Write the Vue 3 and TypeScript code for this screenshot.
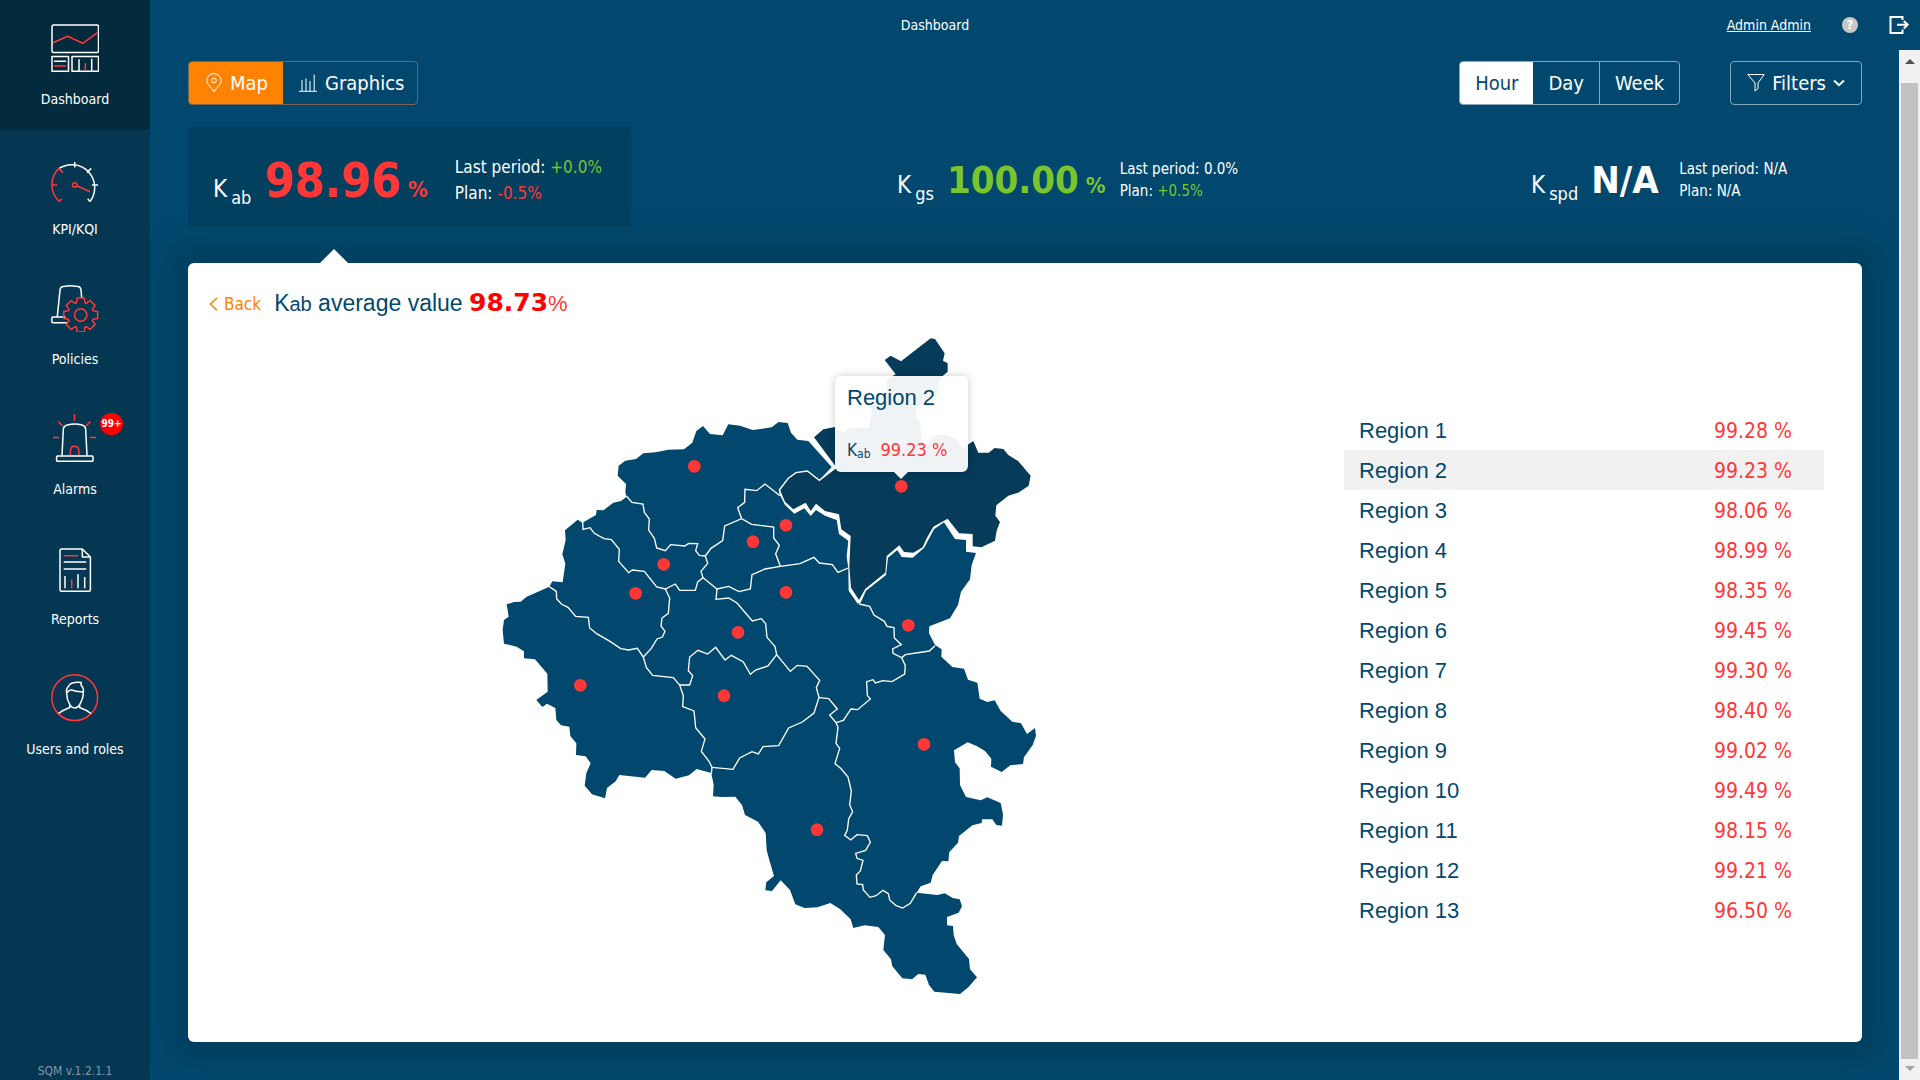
<script setup lang="ts">
import { ref } from 'vue'

interface NavItem { id: string; label: string; badge?: string }
interface Kpi { sub: string; value: string; unit: string; tone: string; last: string; lastTone: string; plan: string; planTone: string }
interface Region { name: string; value: string }

const nav: NavItem[] = [
  { id: 'dashboard', label: 'Dashboard' },
  { id: 'kpi', label: 'KPI/KQI' },
  { id: 'policies', label: 'Policies' },
  { id: 'alarms', label: 'Alarms', badge: '99+' },
  { id: 'reports', label: 'Reports' },
  { id: 'users', label: 'Users and roles' },
]
const activeNav = ref('dashboard')

const kpis: Kpi[] = [
  { sub: 'ab', value: '98.96', unit: '%', tone: 'bad', last: '+0.0%', lastTone: 'good', plan: '-0.5%', planTone: 'bad' },
  { sub: 'gs', value: '100.00', unit: '%', tone: 'good', last: '0.0%', lastTone: '', plan: '+0.5%', planTone: 'good' },
  { sub: 'spd', value: 'N/A', unit: '', tone: '', last: 'N/A', lastTone: '', plan: 'N/A', planTone: '' },
]
const activeKpi = ref('ab')

const periods = ['Hour', 'Day', 'Week']
const period = ref('Hour')
const view = ref('map')

const regions: Region[] = ['99.28', '99.23', '98.06', '98.99', '98.35', '99.45', '99.30', '98.40', '99.02', '99.49', '98.15', '99.21', '96.50']
  .map((value, i) => ({ name: `Region ${i + 1}`, value: `${value} %` }))
const selected = ref('Region 2')

// Eight-toothed gear outline around (29.7, 31)
const gear = Array.from({ length: 8 }, (_, i) => {
  const pts: [number, number][] = [[13, -19], [17.3, -12], [17.3, 12], [13, 19]]
  return pts.map(([r, deg]) => {
    const a = ((i * 45 + deg) * Math.PI) / 180
    return `${(29.7 + r * Math.cos(a)).toFixed(1)},${(31 + r * Math.sin(a)).toFixed(1)}`
  }).join(' ')
}).join(' ')

const land = '50,853 72,846 92,845 110,830 178,800 187,784 218,787 226,731 217,703 227,660 225,631 263,599 277,608 318,585 320,570 340,571 370,548 393,543 409,531 406,515 408,492 383,467 386,437 406,422 438,417 460,400 497,397 535,389 582,388 607,368 619,333 639,318 660,342 698,346 715,313 750,317 788,330 845,322 866,306 893,309 903,338 922,359 955,363 1025,441 988,481 952,453 918,458 895,475 868,510 870,525 885,555 913,581 943,565 962,588 978,570 1005,587 1040,600 1047,642 1075,662 1070,710 1075,745 1076,812 1103,851 1112,848 1128,812 1188,765 1194,713 1222,690 1235,711 1268,713 1302,684 1332,628 1362,607 1395,657 1428,660 1428,695 1458,699 1445,735 1440,778 1413,815 1404,855 1380,895 1318,919 1317,940 1335,975 1355,988 1354,1010 1387,1041 1422,1046 1434,1079 1462,1088 1469,1136 1492,1146 1514,1141 1532,1173 1567,1205 1593,1210 1611,1242 1635,1224 1638,1248 1628,1275 1602,1312 1599,1332 1561,1336 1535,1356 1503,1340 1504,1316 1485,1293 1460,1278 1433,1267 1392,1291 1395,1327 1409,1345 1410,1395 1428,1431 1472,1441 1492,1432 1532,1449 1539,1483 1536,1517 1519,1515 1507,1498 1476,1498 1475,1509 1447,1516 1407,1548 1404,1568 1378,1596 1375,1624 1356,1623 1328,1665 1322,1688 1292,1699 1280,1718 1342,1725 1364,1720 1388,1734 1409,1738 1416,1759 1406,1778 1371,1791 1371,1816 1389,1818 1391,1845 1400,1872 1437,1917 1440,1948 1461,1972 1435,2002 1410,2022 1333,2015 1317,1995 1306,1964 1285,1962 1266,1978 1237,1975 1207,1939 1203,1918 1180,1890 1185,1845 1165,1821 1124,1816 1090,1824 1082,1798 1050,1767 1021,1749 982,1762 944,1764 916,1753 900,1710 872,1681 846,1713 826,1711 829,1687 852,1668 838,1620 830,1590 827,1539 804,1505 765,1485 756,1455 736,1430 695,1431 669,1429 671,1395 664,1359 620,1347 597,1366 557,1376 523,1353 485,1350 465,1373 388,1365 377,1384 351,1404 345,1435 306,1423 284,1397 289,1360 302,1330 287,1309 258,1305 259,1270 241,1248 238,1220 213,1216 199,1200 196,1164 171,1151 157,1161 139,1140 173,1115 172,1061 135,1018 102,1015 102,994 80,980 42,971 38,930 42,900 56,890'

const activeLand = '972,352 1000,328 1035,321 1057,338 1080,323 1135,323 1145,285 1143,255 1190,215 1190,178 1217,163 1184,120 1202,107 1233,124 1322,55 1335,57 1364,100 1359,122 1373,130 1373,155 1350,175 1342,225 1318,243 1280,262 1277,290 1292,310 1293,350 1303,385 1333,347 1365,343 1395,355 1418,385 1450,363 1465,398 1496,398 1514,384 1540,387 1555,405 1585,424 1622,467 1616,497 1585,518 1555,527 1519,556 1516,587 1530,606 1520,632 1515,662 1474,682 1448,679 1448,642 1407,640 1373,596 1330,620 1310,655 1298,682 1270,698 1242,696 1228,676 1190,708 1186,758 1126,806 1107,840 1083,803 1078,740 1082,648 1054,628 1047,583 1005,573 978,551 962,573 947,548 910,568 885,545 870,510 895,475 918,458 952,453 988,481 1040,443'

const borders = [
  '409,528 426,547 459,552 463,577 478,597 476,630 493,655 500,684 526,692 542,674 584,678 596,670 623,671 617,692 628,706 646,708 663,685 698,662 704,618 755,596 785,613 851,621 851,654 868,676 857,701 871,739',
  '755,596 743,563 764,547 765,508 800,512 825,492 870,527',
  '646,708 653,730 633,754 639,773 681,807 716,799 747,815 781,807 786,764 825,747 871,739 930,731 972,712 988,729 1027,734 1044,757 1075,744',
  '278,605 279,628 300,623 313,640 342,656 364,659 388,688 386,724 416,758 427,750 463,754 500,801 526,807 556,792 569,811 616,811 623,786 639,773',
  '526,807 539,834 535,880 516,894 513,918 525,934 517,951 501,957 484,985 460,1011',
  '178,800 199,814 200,836 214,852 234,862 257,889 295,892 299,924 320,941 360,964 392,986 416,990 442,985 460,1011 469,1042 488,1066 550,1073 569,1095 580,1127 578,1160 612,1173 617,1223 645,1257 634,1294 657,1324 666,1342 664,1362',
  '569,1095 599,1095 608,1067 595,1052 599,1011 624,991 653,1002 677,982 705,1020 724,1006 760,1026 781,1063 797,1050 834,1038 860,1004',
  '681,807 678,838 716,834 741,849 787,903 814,896 827,911 831,952 855,980 860,1004 901,1054 922,1036 951,1039 989,1081 979,1103 987,1132 972,1179 937,1206 896,1224 866,1277 819,1280 805,1302 786,1295 749,1314 729,1348 666,1342',
  '987,1133 1016,1136 1042,1167 1019,1185 1038,1208 1044,1222 1038,1270 1049,1285 1035,1331 1052,1345 1074,1371 1084,1413 1079,1455 1088,1475 1076,1497 1072,1530 1064,1546 1082,1560 1101,1544 1132,1547 1141,1567 1127,1591 1097,1600 1101,1615 1119,1621 1111,1653 1099,1665 1101,1692 1118,1694 1120,1710 1140,1732 1158,1727 1179,1711 1195,1721 1199,1740 1217,1756 1238,1764 1261,1750 1280,1718',
  '1038,1208 1060,1201 1083,1167 1103,1169 1141,1137 1132,1126 1130,1085 1149,1079 1156,1089 1179,1082 1206,1085 1244,1062 1246,1037 1235,1013 1246,1004 1318,993 1335,977',
  '1107,852 1139,859 1152,885 1183,904 1191,919 1212,923 1213,954 1234,974 1208,987 1209,1000 1235,1013',
  '1040,441 988,481 952,453 918,458 895,475 868,510 872,527',
]
const pins: [number, number][] = [[613, 439], [521, 733], [437, 820], [789, 665], [888, 616], [888, 817], [744, 937], [1255, 916], [1234, 499], [271, 1096], [702, 1127], [1302, 1273], [981, 1529]]
</script>

<template>
  <div class="app">
    <aside class="sidebar">
      <nav>
        <a v-for="n in nav" :key="n.id" href="#" class="nav-item" :class="{ active: n.id === activeNav }" @click.prevent="activeNav = n.id">
          <svg class="nav-icon" viewBox="0 0 48 48" aria-hidden="true">
            <template v-if="n.id === 'dashboard'">
              <rect x="1" y="1" width="46.5" height="27.5" rx="1.5" />
              <rect x="1" y="32.5" width="16.5" height="14.8" />
              <rect x="21" y="32.5" width="26.5" height="14.8" />
              <path d="M3 37.3h12M28 35.3v12M40.7 34.7v12.6" />
              <path class="r" d="M2 18.7 16.7 12.3 31.7 19.3 46.5 8.7M3 42h12M34.3 39.3v7.4" />
            </template>
            <template v-else-if="n.id === 'kpi'">
              <path d="M8.3 14.3A23 23 0 0 1 39 47.6L36.7 44.7M23.7 8v5.4M47 31h-6M40.2 14.4 36 18.6" />
              <path class="r" d="M12 18.6 7.8 14.4A23 23 0 0 0 8.3 47.6L10.6 44.7M.7 31h5.6M26 31.8 39 37.7" />
              <circle class="r" cx="23.7" cy="31" r="2.2" />
            </template>
            <template v-else-if="n.id === 'policies'">
              <path d="M6.3 32.7 9 6Q9.3 2.3 14 2.3 19.5 1.4 25 2.3 29.8 2.3 30 6L30.7 14M14.5 33H2Q.8 33 .8 34.2V37.5Q.8 38.7 2 38.7H16.5" />
              <polygon class="r" :points="gear" />
              <circle class="r" cx="29.7" cy="31" r="6.2" />
            </template>
            <template v-else-if="n.id === 'alarms'">
              <path d="M11 41.7 12.3 15.5Q12.5 12 16.3 11 23.7 9 31 11 34.5 12 34.7 15.5L36 41.7" />
              <rect x="5.6" y="42" width="36.4" height="5.3" rx="1" />
              <path class="r" d="M19.3 41 19.6 35.5Q20 32.2 23.5 32.2T27.7 35.5L28 41M23.5.3v6.4M7.3 7.5l4.4 4.6M39.5 7.5 35 12.1M2 23.4h6.2M39 23.4h6" />
            </template>
            <template v-else-if="n.id === 'reports'">
              <path d="M31.3 5H10.5Q9 5 9 6.5V45.7Q9 47.2 10.5 47.2H38Q39.4 47.2 39.4 45.7V13L31.3 5V13H39.4M12.7 18h22.6M12.7 25h22.6M14 32v12.3M27 30.3v14M33.7 33v11.3" />
              <path class="r" d="M12.7 11.7H27M20.7 35.3v9" />
            </template>
            <template v-else>
              <circle class="r" cx="23.7" cy="23.7" r="22.9" />
              <path d="M15.8 20Q14.6 15.5 17 13 18.5 10 21 9 25.5 8 30.3 8.5L30 11Q33 14 32.4 18.5 32.2 24 29.8 28.4 27.5 34 23.7 34T18 28.8Q15.8 25 15.8 20ZM16.3 18.5Q18 15.6 20.5 16 27 18.3 32 17.5M18.8 31V33.5Q12 36 7.5 39.5M28.6 31V33.5Q35.5 36 40 39.5" />
            </template>
          </svg>
          <span>{{ n.label }}</span>
          <span v-if="n.badge" class="badge">{{ n.badge }}</span>
        </a>
      </nav>
      <div class="version">SQM v.1.2.1.1</div>
    </aside>

    <div class="main">
      <header class="topbar">
        <div class="page-title">Dashboard</div>
        <div class="user">
          <a href="#">Admin Admin</a>
          <button class="help" type="button" aria-label="Help">?</button>
          <button class="logout" type="button" aria-label="Log out">
            <svg width="20" height="20" viewBox="0 0 20 20" aria-hidden="true"><path d="M13.5 5V2H1.5V18H13.5V14.5M8 9.7H18.5M14.8 6 18.7 9.7 14.8 13.4" /></svg>
          </button>
        </div>
      </header>

      <div class="workspace">
        <main class="content">
          <div class="toolbar">
            <div class="segment orange">
              <button type="button" class="map-tab" :class="{ on: view === 'map' }" @click="view = 'map'">
                <svg width="16" height="20" viewBox="0 0 16 20" aria-hidden="true"><path d="M8 19C5 13.5.8 11.5.8 7.600A7.200 7 0 0 1 15.200 7.600C15.200 11.500 11 13.500 8 19Z" /><circle cx="8" cy="7.500" r="2.300" /></svg>
                Map
              </button>
              <button type="button" class="graph-tab" :class="{ on: view === 'graphics' }" @click="view = 'graphics'">
                <svg width="18" height="20" viewBox="0 0 18 20" aria-hidden="true"><path d="M0 18.300H18M3 18V7M7 18V5.500M11 18V8M15.200 18V1.500" /></svg>
                Graphics
              </button>
            </div>
            <div class="toolbar-right">
              <div class="segment white">
                <button v-for="p in periods" :key="p" type="button" :class="{ on: p === period }" @click="period = p">{{ p }}</button>
              </div>
              <button class="filters" type="button">
                <svg width="18" height="20" viewBox="0 0 18 20" aria-hidden="true"><path d="M.8 1.500H17.200L11 10V15.500L8 18V10Z" /></svg>
                Filters
                <svg width="12" height="8" viewBox="0 0 12 8" aria-hidden="true"><path class="chev" d="M1 1.500 6 6.200 11 1.500" /></svg>
              </button>
            </div>
          </div>

          <div class="kpis">
            <button v-for="k in kpis" :key="k.sub" type="button" class="kpi" :class="{ active: k.sub === activeKpi }" @click="activeKpi = k.sub">
              <span class="kpi-name">K<span class="kpi-sub">{{ k.sub }}</span></span>
              <span class="kpi-value" :class="k.tone">{{ k.value }}<span v-if="k.unit" class="kpi-unit">{{ k.unit }}</span></span>
              <span class="kpi-info">
                <span>Last period: <span :class="k.lastTone">{{ k.last }}</span></span>
                <span>Plan: <span :class="k.planTone">{{ k.plan }}</span></span>
              </span>
            </button>
          </div>

          <section class="panel">
            <div class="panel-head">
              <a href="#" class="back"><svg width="9" height="14" viewBox="0 0 9 14" aria-hidden="true"><path d="M8 .8 1.500 7 8 13.200" /></svg>Back</a>
              <h1>K<small>ab</small> average value <b>98.73</b><span class="avg-unit">%</span></h1>
            </div>
            <div class="panel-body">
              <div class="map-col">
                <div class="map">
                  <svg viewBox="0 0 1710 2070" role="img" aria-label="Region map">
                    <polygon class="land" :points="land" />
                    <polygon class="land-active" :points="activeLand" />
                    <polyline v-for="(b, i) in borders" :key="i" class="border" :points="b" />
                    <circle v-for="(p, i) in pins" :key="i" class="pin" :cx="p[0]" :cy="p[1]" r="19" />
                  </svg>
                  <div class="tooltip">
                    <div class="tip-title">Region 2</div>
                    <div class="tip-row"><span class="tip-k">K<small>ab</small></span><span class="tip-value">99.23 %</span></div>
                  </div>
                </div>
              </div>
              <table class="regions">
                <tbody>
                  <tr v-for="r in regions" :key="r.name" :class="{ sel: r.name === selected }" @click="selected = r.name">
                    <th scope="row">{{ r.name }}</th>
                    <td>{{ r.value }}</td>
                  </tr>
                </tbody>
              </table>
            </div>
          </section>
        </main>
        <div class="scrollbar" aria-hidden="true">
          <i class="up"></i>
          <div class="thumb"></div>
          <i class="down"></i>
        </div>
      </div>
    </div>
  </div>
</template>

<style>
body {
  background: #02486e;
}
</style>

<style scoped>
.app {
  --ui: "DejaVu Sans Condensed", "Noto Sans", sans-serif;
  --arial: "Liberation Sans", Arial, sans-serif;
  display: flex;
  min-height: 100vh;
  font-family: var(--ui);
  font-size: 14px;
  color: #fff;
  background: #02486e;
}
* {
  box-sizing: border-box;
}
button {
  font: inherit;
  color: inherit;
  background: none;
  border: 0;
  padding: 0;
  cursor: pointer;
}
svg {
  display: block;
  fill: none;
  stroke: currentColor;
}
.good { color: #7ac52d; }
.bad { color: #ff3737; }

.sidebar {
  position: relative;
  z-index: 1;
  flex: 0 0 150px;
  display: flex;
  flex-direction: column;
  justify-content: space-between;
  background: #053753;
}
.nav-item {
  position: relative;
  display: flex;
  flex-direction: column;
  align-items: center;
  gap: 18px;
  height: 130px;
  padding-top: 24px;
  line-height: 18px;
  color: #fff;
  text-decoration: none;
}
.nav-item.active { background: #042a3e; }
.nav-icon {
  width: 48px;
  height: 48px;
  stroke-width: 1.5;
  stroke-linejoin: round;
}
.nav-icon .r { stroke: #ff3737; }
.badge {
  position: absolute;
  top: 23px;
  left: 100px;
  width: 23px;
  height: 22px;
  border-radius: 11px;
  background: #f00;
  font-size: 10px;
  font-weight: bold;
  line-height: 21px;
  text-align: center;
}
.version {
  font-size: 12px;
  line-height: 18px;
  text-align: center;
  color: #8298a8;
}

.main {
  flex: 1;
  min-width: 0;
  display: flex;
  flex-direction: column;
}
.topbar {
  display: flex;
  align-items: center;
  height: 50px;
}
.page-title {
  flex: 1;
  text-align: center;
}
.user {
  flex: 0 0 200px;
  display: flex;
  align-items: center;
  justify-content: flex-end;
  padding-right: 11px;
}
.user a { color: #fff; }
.help {
  width: 16px;
  height: 16px;
  margin: 0 31px 0 31px;
  border-radius: 8px;
  background: #c8c8c8;
  color: #fff;
  font-size: 12px;
  font-weight: bold;
  line-height: 16px;
}
.logout svg { stroke-width: 2; }

.workspace {
  flex: 1;
  display: flex;
}
.content {
  flex: 1;
  min-width: 0;
  overflow: hidden;
  padding: 11px 37px 38px 38px;
}
.toolbar, .toolbar-right, .segment, .filters, .segment button {
  display: flex;
  align-items: center;
}
.toolbar {
  justify-content: space-between;
  font-size: 20px;
}
.toolbar-right { gap: 50px; }
.segment {
  height: 44px;
  border: 1px solid #78664d;
  border-radius: 4px;
  overflow: hidden;
}
.segment button {
  height: 100%;
  gap: 8px;
}
.map-tab { padding: 0 15px 0 17px; }
.graph-tab { padding: 0 13px 0 16px; }
.orange .on { background: #ff8200; }
.white { border-color: #86a6b9; }
.white button { padding: 0 15px; }
.white button + button + button { border-left: 1px solid #86a6b9; }
.white .on {
  background: #fff;
  color: #02486e;
}
.filters {
  height: 44px;
  padding: 0 16px;
  gap: 7px;
  border: 1px solid #86a6b9;
  border-radius: 4px;
}
.chev { stroke-width: 2; }

.kpis {
  display: grid;
  grid-template-columns: 684fr 634fr 356fr;
  margin-top: 22px;
}
.kpi {
  justify-self: start;
  display: flex;
  align-items: baseline;
  height: 100px;
  padding: 6px 25px 0;
  line-height: 22px;
  font-size: 15px;
  text-align: left;
  white-space: nowrap;
}
.kpi.active {
  padding-right: 29px;
  background: #024060;
  font-size: 17px;
  line-height: 26px;
}
.kpi-name { font-size: 24px; }
.kpi-sub {
  position: relative;
  top: 7px;
  margin-left: 4px;
  font-size: 18px;
}
.kpi-value {
  min-width: 74px;
  margin-left: 13px;
  font-size: 38px;
  line-height: 94px;
  font-weight: bold;
}
.kpi.active .kpi-value { font-size: 48px; }
.kpi-unit {
  margin-left: 7px;
  font-size: 22px;
}
.kpi-info {
  align-self: center;
  display: flex;
  flex-direction: column;
  margin-left: 14px;
}
.kpi.active .kpi-info { margin-left: 27px; }

.panel {
  position: relative;
  margin-top: 36px;
  padding-bottom: 32px;
  border-radius: 6px;
  background: #fff;
  color: #02486e;
  box-shadow: 0 0 25px 20px #024060;
}
.panel::before {
  content: "";
  position: absolute;
  top: -14px;
  left: 132px;
  border: 14px solid transparent;
  border-top: 0;
  border-bottom-color: #fff;
}
.panel-head {
  display: flex;
  align-items: baseline;
  gap: 13px;
  height: 57px;
  padding: 24px 21px 0;
}
.back {
  display: flex;
  align-items: center;
  gap: 6px;
  font-size: 17px;
  color: #ff8200;
  text-decoration: none;
}
.back svg { stroke-width: 1.5; }
h1 {
  margin: 0;
  font: 23px/32px var(--arial);
}
h1 small { font-size: 20px; }
h1 b {
  font-family: "DejaVu Sans", sans-serif;
  font-size: 25px;
  color: #f00;
}
.avg-unit {
  font-size: 22px;
  color: #ff3737;
}
.panel-body {
  display: flex;
  align-items: flex-start;
  padding-right: 38px;
}
.map-col {
  flex: 1;
  display: flex;
  justify-content: center;
  padding-left: 18px;
}
.map {
  position: relative;
  width: 570px;
}
.land { fill: #02486e; stroke: none; }
.land-active { fill: #063b5a; stroke: none; }
.border { stroke: #fff; stroke-width: 4; }
.pin { fill: #ff3737; stroke: none; }
.tooltip {
  position: absolute;
  left: 345px;
  top: 56px;
  width: 133px;
  height: 96px;
  padding: 8px 12px;
  border-radius: 6px;
  background: rgba(255, 255, 255, .94);
  box-shadow: 0 0 10px rgba(0, 0, 0, .2);
}
.tooltip::after {
  content: "";
  position: absolute;
  top: 96px;
  left: 59px;
  border: 7px solid transparent;
  border-bottom: 0;
  border-top-color: #f0f3f6;
}
.tip-title {
  font: 22px/28px var(--arial);
}
.tip-row {
  display: flex;
  align-items: baseline;
  gap: 10px;
  margin-top: 24px;
  font-size: 18px;
  line-height: 28px;
  white-space: nowrap;
}
.tip-k { font-size: 17px; }
.tip-k small {
  position: relative;
  top: 2px;
  font-size: 12px;
}
.tip-value, td { color: #ff3737; }
.regions {
  width: 480px;
  margin-top: 90px;
  border-collapse: collapse;
}
th, td {
  height: 40px;
  padding: 2px 0 0;
  line-height: 28px;
}
th {
  padding-left: 15px;
  text-align: left;
  font: 22px/28px var(--arial);
}
td {
  padding-right: 32px;
  text-align: right;
  font-size: 21px;
}
.sel { background: #f1f1f1; }

.scrollbar {
  flex: 0 0 21px;
  display: flex;
  flex-direction: column;
  align-items: center;
  background: #f1f1f1;
}
.scrollbar i {
  border: 5px solid transparent;
}
.scrollbar .up {
  margin: 9px 0 14px;
  border-top: 0;
  border-bottom-color: #505050;
}
.scrollbar .down {
  margin: 7px 0 9px;
  border-bottom: 0;
  border-top-color: #a3a3a3;
}
.thumb {
  flex: 1;
  width: 17px;
  margin-top: 5px;
  background: #c1c1c1;
}
</style>
